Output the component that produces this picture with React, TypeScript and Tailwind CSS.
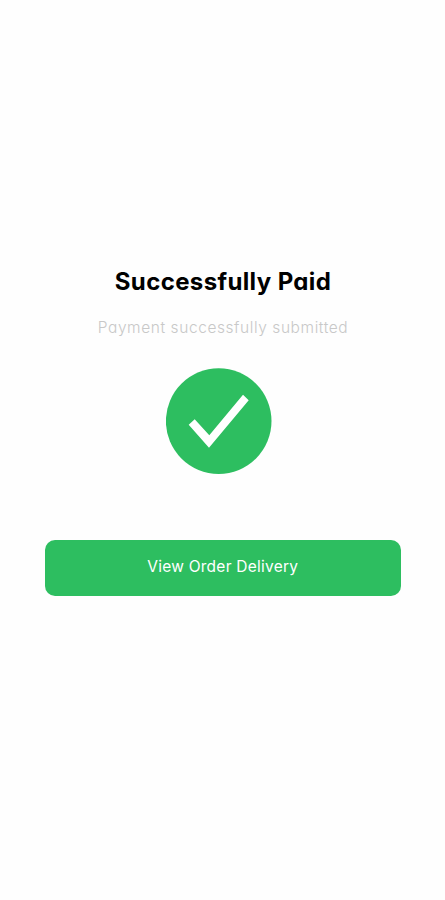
const SuccessIcon = () => {
  return (
    <svg
      viewBox="0 0 106 106"
      className="w-[106px] h-[106px] ml-[166px] mt-[28px]"
      aria-hidden="true"
    >
      <circle cx="52.7" cy="53.1" r="52.8" fill="#2dbe60" />
      <polygon
        points="22.7,56.7 28.7,51.3 43.3,67.3 77,26.7 82.7,32.3 43,79.7"
        fill="#fff"
      />
    </svg>
  );
};

const App = () => {
  return (
    <main className="w-full h-screen overflow-hidden flex flex-col bg-[#fefefe] pt-[266px] font-['Inter',sans-serif] [font-feature-settings:'cv11']">
      {/* Title */}
      <h1 className="h-8 pl-px text-center text-[24px] leading-8 font-bold tracking-[0.38px] text-black whitespace-nowrap">
        Successfully Paid
      </h1>
      <p className="h-6 mt-[18px] pl-px text-center text-[15.5px] leading-6 font-light tracking-[0.58px] text-[#c8c8c8] whitespace-nowrap">
        Payment successfully submitted
      </p>

      <SuccessIcon />

      {/* Order button */}
      <button className="mt-[66px] ml-[45px] w-[355.5px] h-[56px] pb-[3px] rounded-[10px] bg-[#2dbe60] text-[15.5px] leading-6 tracking-[0.25px] text-white whitespace-nowrap">
        View Order Delivery
      </button>
    </main>
  );
};

export default App;
